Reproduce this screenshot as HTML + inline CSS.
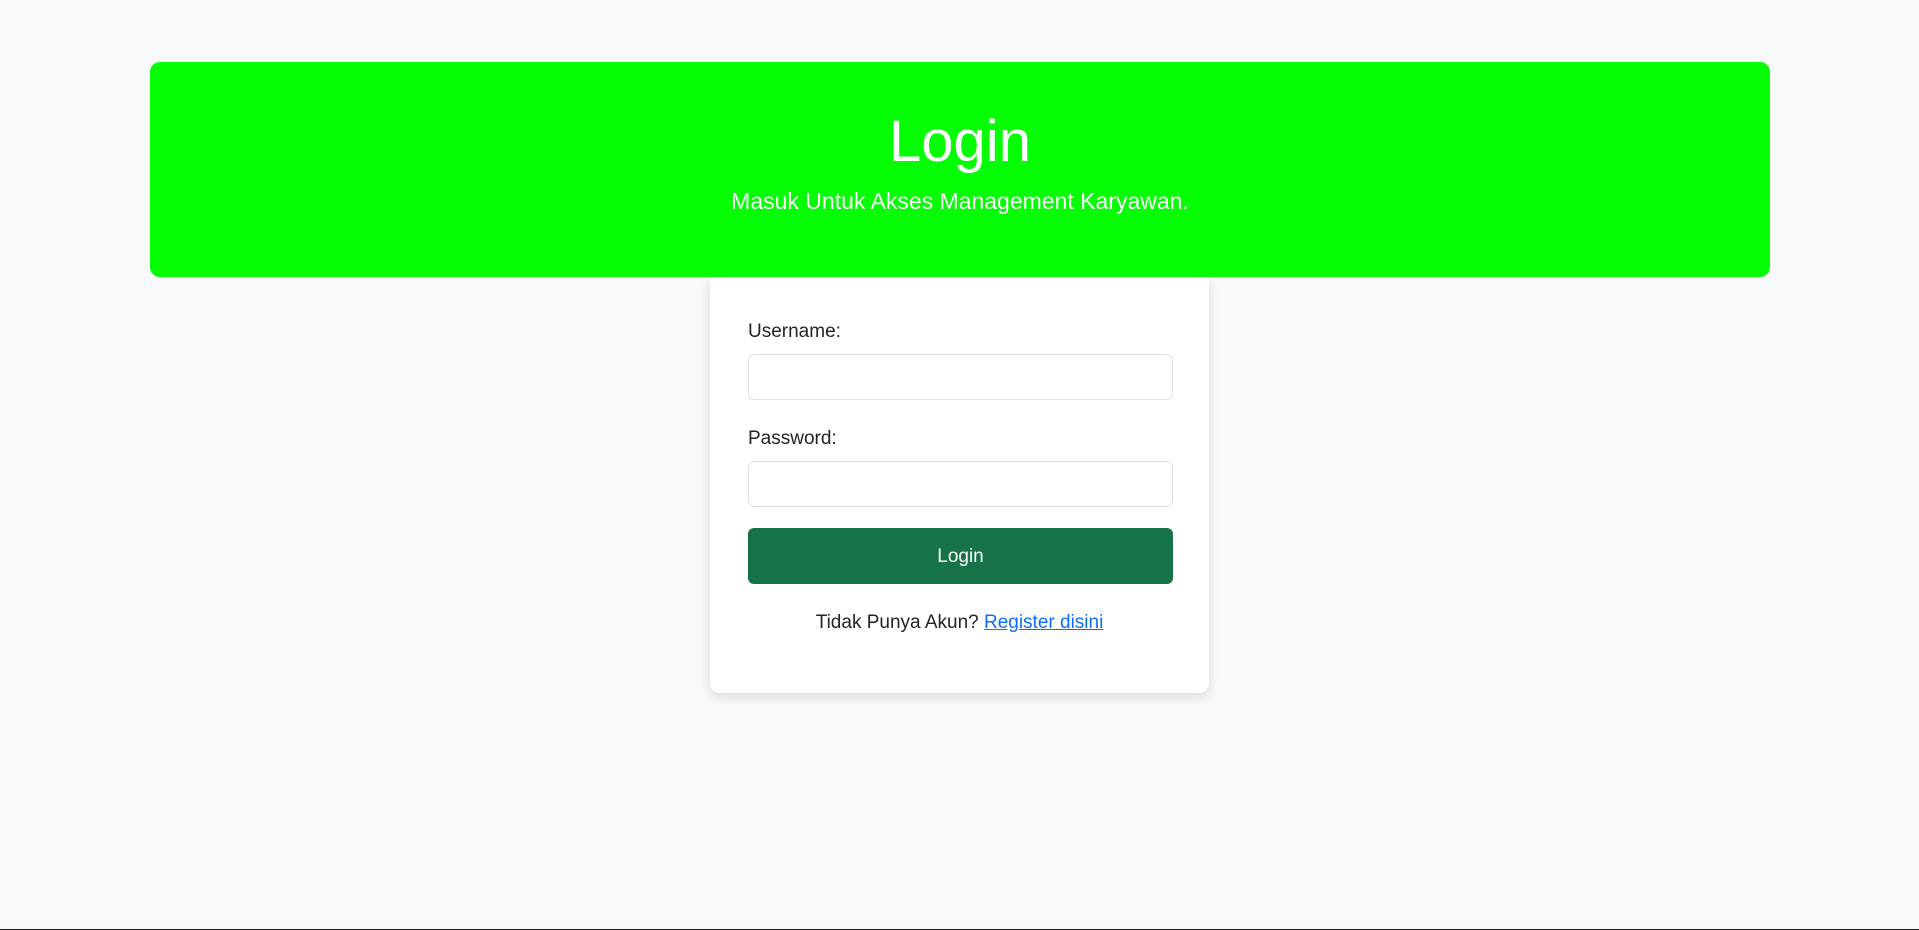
<!DOCTYPE html>
<html><head><meta charset="utf-8"><style>
*{box-sizing:border-box;margin:0;padding:0}
html,body{width:1919px;height:930px;overflow:hidden}
body{background:#f8f9fa;font-family:"Liberation Sans",sans-serif;color:#212529;position:relative}
.banner{position:absolute;left:150px;top:62px;width:1620px;height:215px;background:#05fe05;border-radius:10px;text-align:center;color:#fff}
.banner h1{font-weight:300;font-size:58px;line-height:1;position:absolute;left:0;right:0;top:51px}
.banner p{font-size:23px;font-weight:300;position:absolute;left:0;right:0;top:126px}
.card{position:absolute;left:710px;top:277px;width:499px;height:416px;background:#fff;border-radius:0 0 10px 10px;box-shadow:0 4px 10px rgba(0,0,0,.12)}
label{position:absolute;left:38px;font-size:19px}
.in{position:absolute;left:38px;width:425px;height:46px;border:1px solid #dee2e6;border-radius:6px}
.btn{position:absolute;left:38px;top:251px;width:425px;height:56px;background:#157347;border-radius:6px;color:#fff;font-size:19px;text-align:center;line-height:58px}
.reg{position:absolute;left:0;right:0;top:335px;text-align:center;font-size:19px}
.reg a{color:#0d6efd;text-decoration:underline}
.line{position:absolute;left:0;bottom:0;width:100%;height:1px;background:#222}
</style></head><body>
<div class="banner"><h1>Login</h1><p>Masuk Untuk Akses Management Karyawan.</p></div>
<div class="card">
<label style="top:44px">Username:</label>
<div class="in" style="top:77px"></div>
<label style="top:151px">Password:</label>
<div class="in" style="top:184px"></div>
<div class="btn">Login</div>
<div class="reg">Tidak Punya Akun? <a>Register disini</a></div>
</div>
<div class="line"></div>
</body></html>
